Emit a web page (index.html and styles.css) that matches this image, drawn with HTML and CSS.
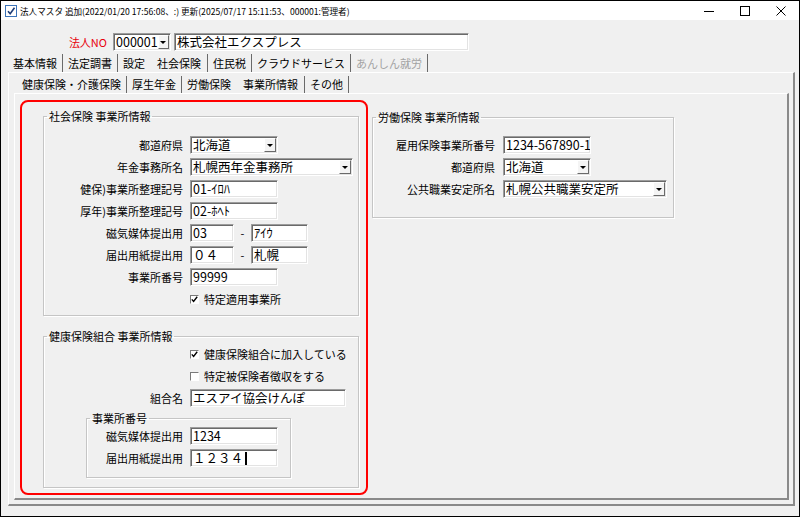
FILE: index.html
```html
<!DOCTYPE html>
<html lang="ja">
<head>
    <meta charset="UTF-8">
    <meta name="viewport" content="width=device-width,initial-scale=1.0">
    <title>法人マスタ</title>
    <link rel="stylesheet" href="styles.css">
</head>
<body>
    <div class="window">
        <div class="titlebar">
            <svg class="app-icon" width="12" height="12" viewBox="0 0 12 12">
                <rect x="0.5" y="0.5" width="11" height="11" fill="#fff" stroke="#3b73b9"/>
                <path d="M3 6.2l2.2 2.6 4.3-6" fill="none" stroke="#1d3c78" stroke-width="1.6"/>
            </svg>
            <span class="title">法人マスタ 追加(2022/01/20 17:56:08、:) 更新(2025/07/17 15:11:53、000001:管理者)</span>
            <div class="controls">
                <span class="ctl"><svg width="10" height="10" viewBox="0 0 10 10"><path d="M0 5.5h10" stroke="#000"/></svg></span>
                <span class="ctl"><svg width="10" height="10" viewBox="0 0 10 10"><rect x="0.5" y="0.5" width="9" height="9" fill="none" stroke="#000"/></svg></span>
                <span class="ctl"><svg width="10" height="10" viewBox="0 0 10 10"><path d="M0.5 0.5l9 9M9.5 0.5l-9 9" stroke="#000"/></svg></span>
            </div>
        </div>
        <div class="client">
            <div class="head">
                <span class="head-label">法人NO</span>
                <div class="combo w58"><span class="val">000001</span><span class="drop"></span></div>
                <div class="edit w295 gap3">株式会社エクスプレス</div>
            </div>
            <div class="tabs main-tabs">
                <span class="tab">基本情報</span>
                <span class="tab">法定調書</span>
                <span class="tab pre">設定</span>
                <span class="tab active">社会保険</span>
                <span class="tab">住民税</span>
                <span class="tab">クラウドサービス</span>
                <span class="tab off">あんしん就労</span>
            </div>
            <div class="page outer">
                <div class="tabs sub-tabs">
                    <span class="tab">健康保険・介護保険</span>
                    <span class="tab">厚生年金</span>
                    <span class="tab pre">労働保険</span>
                    <span class="tab active">事業所情報</span>
                    <span class="tab">その他</span>
                </div>
                <div class="page inner">
                    <div class="highlight">
                        <fieldset class="group shaho">
                            <legend>社会保険 事業所情報</legend>
                            <div class="row">
                                <span class="lbl">都道府県</span>
                                <div class="combo w88"><span class="val">北海道</span><span class="drop"></span></div>
                            </div>
                            <div class="row">
                                <span class="lbl">年金事務所名</span>
                                <div class="combo w163"><span class="val">札幌西年金事務所</span><span class="drop"></span></div>
                            </div>
                            <div class="row">
                                <span class="lbl">健保)事業所整理記号</span>
                                <div class="edit w88">01-ｲﾛﾊ</div>
                            </div>
                            <div class="row">
                                <span class="lbl">厚年)事業所整理記号</span>
                                <div class="edit w88">02-ﾎﾍﾄ</div>
                            </div>
                            <div class="row">
                                <span class="lbl">磁気媒体提出用</span>
                                <div class="edit w44">03</div>
                                <span class="dash">-</span>
                                <div class="edit w57">ｱｲｳ</div>
                            </div>
                            <div class="row">
                                <span class="lbl">届出用紙提出用</span>
                                <div class="edit w44">０４</div>
                                <span class="dash">-</span>
                                <div class="edit w57">札幌</div>
                            </div>
                            <div class="row">
                                <span class="lbl">事業所番号</span>
                                <div class="edit w88">99999</div>
                            </div>
                            <div class="row check-row">
                                <span class="box"><svg width="7" height="7" viewBox="0 0 7 7"><path d="M0.8 3.4l1.8 2 3.6-4.6" fill="none" stroke="#000" stroke-width="1.4"/></svg></span>
                                <span class="chk-text">特定適用事業所</span>
                            </div>
                        </fieldset>
                        <fieldset class="group kenpo">
                            <legend>健康保険組合 事業所情報</legend>
                            <div class="row check-row">
                                <span class="box"><svg width="7" height="7" viewBox="0 0 7 7"><path d="M0.8 3.4l1.8 2 3.6-4.6" fill="none" stroke="#000" stroke-width="1.4"/></svg></span>
                                <span class="chk-text">健康保険組合に加入している</span>
                            </div>
                            <div class="row check-row">
                                <span class="box"></span>
                                <span class="chk-text">特定被保険者徴収をする</span>
                            </div>
                            <div class="row">
                                <span class="lbl">組合名</span>
                                <div class="edit w156">エスアイ協会けんぽ</div>
                            </div>
                            <fieldset class="group sub">
                                <legend>事業所番号</legend>
                                <div class="row">
                                    <span class="lbl">磁気媒体提出用</span>
                                    <div class="edit w88">1234</div>
                                </div>
                                <div class="row">
                                    <span class="lbl">届出用紙提出用</span>
                                    <div class="edit w88">１２３４<span class="caret"></span></div>
                                </div>
                            </fieldset>
                        </fieldset>
                    </div>
                    <fieldset class="group rodo">
                        <legend>労働保険 事業所情報</legend>
                        <div class="row">
                            <span class="lbl">雇用保険事業所番号</span>
                            <div class="edit w88">1234-567890-1</div>
                        </div>
                        <div class="row">
                            <span class="lbl">都道府県</span>
                            <div class="combo w88"><span class="val">北海道</span><span class="drop"></span></div>
                        </div>
                        <div class="row">
                            <span class="lbl">公共職業安定所名</span>
                            <div class="combo w164"><span class="val">札幌公共職業安定所</span><span class="drop"></span></div>
                        </div>
                    </fieldset>
                </div>
            </div>
        </div>
    </div>
</body>
</html>
```

FILE: styles.css
```css
*{
    box-sizing:border-box;
}
body,html{
    margin:0;
    padding:0;
    background-color:#fff;
    font-family:"Noto Sans CJK JP","Noto Sans",sans-serif;
    color:#000;
}
.window{
    width:800px;
    height:517px;
    border:1px solid #000;
    background-color:#f0f0f0;
    display:flex;
    flex-direction:column;
    overflow:hidden;
}
.titlebar{
    height:19px;
    flex-shrink:0;
    background-color:#fff;
    display:flex;
    align-items:center;
}
.app-icon{
    margin:0 3px 0 4px;
    flex-shrink:0;
}
.title{
    flex:1;
    font-size:8.6px;
    white-space:nowrap;
}
.controls{
    display:flex;
    height:19px;
}
.ctl{
    width:36px;
    display:flex;
    align-items:center;
    justify-content:center;
}
.client{
    flex:1;
    display:flex;
    flex-direction:column;
}
.head{
    display:flex;
    align-items:center;
    height:31px;
    padding-top:13px;
}
.head-label{
    width:106px;
    margin-right:6px;
    text-align:right;
    font-size:11px;
    color:#e8000b;
}
/* edit boxes and combos */
.edit,.combo{
    height:18px;
    flex-shrink:0;
    background-color:#fff;
    border:1px solid;
    border-color:#9c9c9c #fff #fff #9c9c9c;
    box-shadow:inset 1px 1px 0 #6a6a6a,inset -1px -1px 0 #e3e3e3;
    font-size:12.5px;
    line-height:16px;
    white-space:nowrap;
    overflow:hidden;
}
.edit{
    padding-left:2px;
}
.combo{
    display:flex;
    align-items:center;
}
.combo .val{
    flex:1;
    padding-left:2px;
}
.drop{
    width:12px;
    height:14px;
    margin-right:1px;
    background-color:#f4f4f4;
    border:1px solid;
    border-color:#fff #6a6a6a #6a6a6a #fff;
    display:flex;
    align-items:center;
    justify-content:center;
}
.drop::after{
    content:"";
    border-left:3px solid transparent;
    border-right:3px solid transparent;
    border-top:3px solid #000;
}
.gap3{margin-left:3px;}
.w44{width:44px;}
.w57{width:57px;}
.w58{width:58px;}
.w88{width:88px;}
.w156{width:156px;}
.w163{width:163px;}
.w164{width:164px;}
.w295{width:295px;}
.caret{
    display:inline-block;
    width:2px;
    height:13px;
    margin-left:2px;
    vertical-align:-2px;
    background-color:#000;
}
.dash{
    width:17px;
    text-align:center;
    font-size:11px;
}
/* tabs */
.tabs{
    display:flex;
    font-size:11px;
    white-space:nowrap;
    flex-shrink:0;
}
.main-tabs{
    height:18px;
    line-height:18px;
    margin:3px 0 0 7px;
}
.sub-tabs{
    height:17px;
    line-height:17px;
    margin:3px 0 0 8px;
}
.tab{
    padding:0 5px;
    border-right:1px solid #6a6a6a;
}
.tab.pre{
    border-right:none;
}
.tab.active{
    padding:0 6px 0 7px;
}
.tab.off{
    color:#a3a3a3;
}
.page{
    border:1px solid #fff;
    border-right:2px solid #8a8a8a;
    border-bottom:2px solid #8a8a8a;
}
.page.outer{
    height:434px;
    margin:0 4px 0 7px;
    display:flex;
    flex-direction:column;
}
.page.inner{
    height:407px;
    margin:0 4px 0 5px;
    display:flex;
    align-items:flex-start;
}
.highlight{
    width:348px;
    height:395px;
    margin:6px 0 0 5px;
    padding:7px 0 0 21px;
    border:2px solid #f00;
    border-radius:8px;
    flex-shrink:0;
}
/* group boxes */
.group{
    margin:0;
    padding:0;
    min-width:0;
    border:1px solid #c5c5c5;
    box-shadow:1px 1px 0 #fff,inset 1px 1px 0 #fff;
}
.group legend{
    margin-left:3px;
    padding:0 2px;
    font-size:11px;
    line-height:14px;
}
.row{
    display:flex;
    align-items:center;
    height:22px;
}
.lbl{
    flex-shrink:0;
    text-align:right;
    white-space:nowrap;
    font-size:11px;
}
.shaho{
    width:316px;
    padding:11px 0 5px;
}
.kenpo{
    width:316px;
    margin-top:13px;
}
.shaho .lbl,.kenpo .lbl{
    width:139px;
    margin-right:7px;
}
.check-row{
    padding-left:146px;
}
.box{
    width:9px;
    height:9px;
    margin-right:5px;
    background-color:#fff;
    border:1px solid;
    border-color:#7a7a7a #fff #fff #7a7a7a;
    display:flex;
    align-items:center;
    justify-content:center;
}
.chk-text{
    font-size:11px;
    white-space:nowrap;
}
.kenpo .sub{
    width:205px;
    margin:2px 0 9px 42px;
    padding-bottom:8px;
}
.kenpo .sub .lbl{
    width:96px;
    margin-right:7px;
}
.rodo{
    width:302px;
    margin:16px 0 0 4px;
    padding:10px 0 17px;
}
.rodo .lbl{
    width:122px;
    margin-right:8px;
}
```
